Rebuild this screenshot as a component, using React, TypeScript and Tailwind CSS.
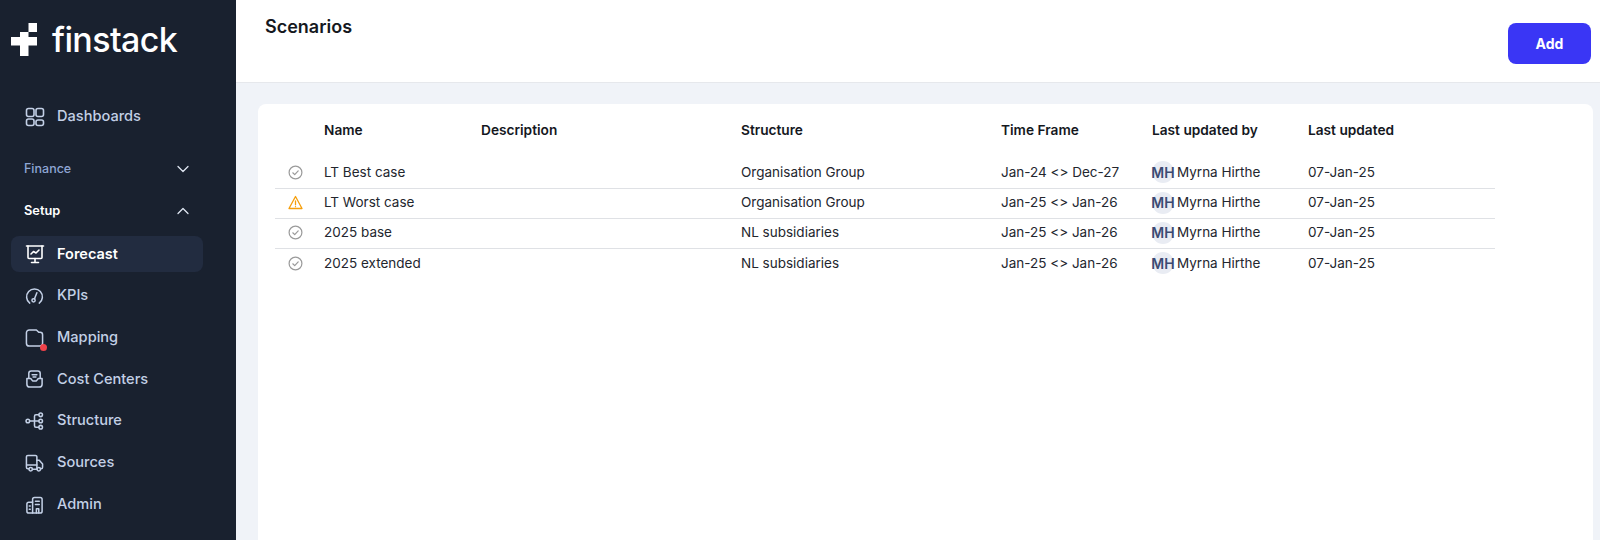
import React from "react"
import { ChevronDown, ChevronUp } from "lucide-react"

const iconProps = {
  width: 20,
  height: 20,
  viewBox: "0 0 20 20",
  fill: "none",
  stroke: "currentColor",
  strokeWidth: 1.6,
  strokeLinecap: "round" as const,
  strokeLinejoin: "round" as const,
}

function DashboardsIcon() {
  return (
    <svg {...iconProps}>
      <rect x="1.5" y="1.5" width="7.5" height="8" rx="2" />
      <rect x="11" y="1.5" width="7.5" height="8" rx="2" />
      <rect x="1.5" y="12" width="7.5" height="6.5" rx="2" />
      <rect x="11" y="13" width="7.5" height="5.5" rx="2" />
    </svg>
  )
}

function ForecastIcon() {
  return (
    <svg {...iconProps}>
      <path d="M1.5 2h17" />
      <path d="M3 2v11.5a1 1 0 0 0 1 1h12a1 1 0 0 0 1-1V2" />
      <path d="M6 10l2.5-2.5 2.5 1.5 3-3" />
      <path d="M10 14.5V18M6.5 18.500h7" />
    </svg>
  )
}

function KpiIcon() {
  return (
    <svg {...iconProps}>
      <path d="M5 17.500a8.300 8.300 0 1 1 10 0" />
      <circle cx="9" cy="14.500" r="1.700" />
      <path d="M10 13l2.500-6.500" />
    </svg>
  )
}

function MappingIcon() {
  return (
    <svg {...iconProps}>
      <path d="M1.500 4.500a3 3 0 0 1 3-3h7.500l2.500 2.500h1.500a2.500 2.500 0 0 1 2.500 2.500v9a3 3 0 0 1-3 3h-11a3 3 0 0 1-3-3z" />
    </svg>
  )
}

function CostCentersIcon() {
  return (
    <svg {...iconProps}>
      <path d="M4 9V4a2.500 2.500 0 0 1 2.500-2.500h7A2.500 2.500 0 0 1 16 4v5" />
      <path d="M7.500 5.500h5M8.500 8h3" />
      <path d="M2 9.500h4l2 2.500h4l2-2.500h4v6a3 3 0 0 1-3 3H5a3 3 0 0 1-3-3z" />
    </svg>
  )
}

function StructureIcon() {
  return (
    <svg {...iconProps}>
      <circle cx="3" cy="10" r="1.900" />
      <circle cx="16.500" cy="3.500" r="1.900" />
      <circle cx="16.500" cy="10" r="1.900" />
      <circle cx="16.500" cy="16.500" r="1.900" />
      <path d="M5 10h9.500M14.500 3.500h-3a1.500 1.500 0 0 0-1.500 1.500v10a1.500 1.500 0 0 0 1.500 1.500h3" />
    </svg>
  )
}

function SourcesIcon() {
  return (
    <svg {...iconProps}>
      <path d="M4 16H3a1.500 1.500 0 0 1-1.500-1.500V3.500A1.500 1.500 0 0 1 3 2h8a1.500 1.500 0 0 1 1.500 1.500V16" />
      <path d="M12.500 7H15l3.500 4v3.500A1.500 1.500 0 0 1 17 16" />
      <path d="M2 12h10.500" />
      <circle cx="6" cy="16.500" r="1.800" />
      <circle cx="14.500" cy="16.500" r="1.800" />
      <path d="M7.800 16.500h4.900" />
    </svg>
  )
}

function AdminIcon() {
  return (
    <svg {...iconProps}>
      <path d="M8 18.500V4a2 2 0 0 1 2-2h6a2 2 0 0 1 2 2v12.500a2 2 0 0 1-2 2z" />
      <path d="M8 7H4a2 2 0 0 0-2 2v7.500a2 2 0 0 0 2 2h4" />
      <path d="M11 6h4M11 9.500h4M4.500 11h1M4.500 14.500h1M12 18.500V14h2.500v4.500" />
    </svg>
  )
}

function CheckIcon() {
  return (
    <svg width="15" height="15" viewBox="0 0 15 15" fill="none" stroke="#9a9a9a" strokeWidth="1.200" strokeLinecap="round" strokeLinejoin="round">
      <circle cx="7.500" cy="7.500" r="6.400" />
      <path d="M4.800 7.800l1.900 1.800 3.500-3.700" />
    </svg>
  )
}

function WarnIcon() {
  return (
    <svg width="15" height="15" viewBox="0 0 15 15" fill="none" stroke="#f59e0b" strokeWidth="1.300" strokeLinecap="round" strokeLinejoin="round">
      <path d="M7.500 1.500L14 13.500H1z" />
      <path d="M7.500 6v3.800M7.500 11.600v.1" />
    </svg>
  )
}

function Logo() {
  return (
    <div className="flex items-center h-[80px] pl-[11px]">
      <svg width="26" height="34" viewBox="0 0 26 34" className="shrink-0">
        <path d="M17.500 0H26V9H17.500zM9 9H17.500V14H26V22.500H17.500V33H9V22.500H0V14H9z" fill="#ffffff" />
      </svg>
      <span className="ml-[15px] text-[34px] leading-none font-medium tracking-[-0.6px] text-white">finstack</span>
    </div>
  )
}

const setupItems = [
  { label: "KPIs", icon: <KpiIcon /> },
  { label: "Mapping", icon: <MappingIcon />, dot: true },
  { label: "Cost Centers", icon: <CostCentersIcon /> },
  { label: "Structure", icon: <StructureIcon /> },
  { label: "Sources", icon: <SourcesIcon /> },
  { label: "Admin", icon: <AdminIcon /> },
]

const scenarios = [
  { name: "LT Best case", structure: "Organisation Group", frame: "Jan-24 <> Dec-27", warn: false },
  { name: "LT Worst case", structure: "Organisation Group", frame: "Jan-25 <> Jan-26", warn: true },
  { name: "2025 base", structure: "NL subsidiaries", frame: "Jan-25 <> Jan-26", warn: false },
  { name: "2025 extended", structure: "NL subsidiaries", frame: "Jan-25 <> Jan-26", warn: false },
]

function Sidebar() {
  return (
    <aside className="w-[236px] shrink-0 bg-[#19212f] flex flex-col">
      <Logo />
      <div className="flex items-center h-[36px] mt-[19px] pl-[25px] gap-[12px] text-[14.600px] font-medium text-[#c3d0e6]">
        <DashboardsIcon />
        <span>Dashboards</span>
      </div>
      <div className="flex items-center justify-between h-[20px] mt-[24px] pl-[24px] pr-[43px] text-[12.500px] font-medium text-[#8ea6d4]">
        <span>Finance</span>
        <ChevronDown size={20} strokeWidth={1.500} className="text-[#dfe6f2]" />
      </div>
      <div className="flex items-center justify-between h-[20px] mt-[22px] pl-[24px] pr-[43px] text-[12.800px] font-semibold text-white">
        <span>Setup</span>
        <ChevronUp size={20} strokeWidth={1.500} className="text-[#dfe6f2]" />
      </div>
      <div className="flex items-center h-[36px] mt-[15px] mx-[11px] w-[192px] pl-[14px] gap-[12px] rounded-lg bg-[#222c40] text-[14.500px] font-semibold text-white">
        <ForecastIcon />
        <span>Forecast</span>
      </div>
      <nav className="flex flex-col mt-[3px]">
        {setupItems.map((item) => (
          <div key={item.label} className="flex items-center h-[41.800px] pl-[25px] gap-[13px] text-[14.600px] font-medium text-[#c3d0e6]">
            <span className="relative flex w-[19px] justify-center">
              {item.icon}
              {item.dot && <span className="absolute -right-[3px] -bottom-[3px] w-[7px] h-[7px] rounded-full bg-[#f0424a]" />}
            </span>
            <span>{item.label}</span>
          </div>
        ))}
      </nav>
    </aside>
  )
}

function ScenarioRow({ row, index }: { row: (typeof scenarios)[number]; index: number }) {
  const last = index === scenarios.length - 1
  return (
    <div className={`flex items-center text-[13.500px] text-[#23262e] ${index === 0 ? "h-[32px] pb-[1px]" : "h-[30px] pb-[2px]"} ${last ? "" : "border-b border-[#dfe1e5]"}`}>
      <div className="w-[49px] pl-[13px] flex">{row.warn ? <WarnIcon /> : <CheckIcon />}</div>
      <div className="w-[157px]">{row.name}</div>
      <div className="w-[260px]" />
      <div className="w-[260px]">{row.structure}</div>
      <div className="w-[151px]">{row.frame}</div>
      <div className="w-[156px] flex items-center">
        <span className="flex items-center justify-center w-[22px] h-[22px] rounded-full bg-[#e9ecf3] text-[14px] font-semibold text-[#3b4a72]">MH</span>
        <span className="ml-[3px]">Myrna Hirthe</span>
      </div>
      <div>07-Jan-25</div>
    </div>
  )
}

export default function App() {
  return (
    <div className="flex h-[540px] w-[1600px] overflow-hidden font-['Inter',sans-serif]">
      <Sidebar />
      <main className="flex-1 flex flex-col bg-[#f0f3f8]">
        <header className="flex justify-between h-[83px] shrink-0 bg-white border-b border-[#e6e8ec] pl-[29px] pr-[9px]">
          <h1 className="mt-[17px] text-[18px] leading-[20px] font-semibold text-[#15181e]">Scenarios</h1>
          <button className="mt-[23px] w-[83px] h-[41px] rounded-lg bg-[#3a36f5] text-[14px] font-bold text-white">Add</button>
        </header>
        <section className="flex-1 mt-[21px] ml-[22px] mr-[7px] bg-white rounded-t-lg pl-[17px]">
          <div className="w-[1220px]">
            <div className="flex items-center h-[53px] text-[13.700px] font-semibold text-[#15181e]">
              <div className="w-[49px]" />
              <div className="w-[157px]">Name</div>
              <div className="w-[260px]">Description</div>
              <div className="w-[260px]">Structure</div>
              <div className="w-[151px]">Time Frame</div>
              <div className="w-[156px]">Last updated by</div>
              <div>Last updated</div>
            </div>
            <div>
              {scenarios.map((row, i) => (
                <ScenarioRow key={row.name} row={row} index={i} />
              ))}
            </div>
          </div>
        </section>
      </main>
    </div>
  )
}
